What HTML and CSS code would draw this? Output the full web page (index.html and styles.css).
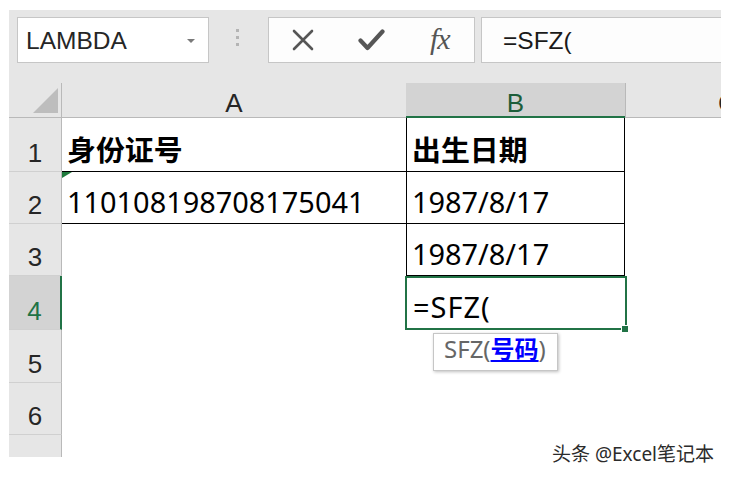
FILE: index.html
```html
<!DOCTYPE html>
<html lang="zh">
<head>
<meta charset="utf-8">
<title>Excel SFZ</title>
<link rel="stylesheet" href="styles.css">
</head>
<body>
<div class="window">
  <div class="fbar">
    <div class="namebox"><span class="nb-text">LAMBDA</span><span class="nb-arrow"></span></div>
    <div class="grip"><i></i><i></i><i></i></div>
    <div class="btns">
      <span class="btn"><svg width="22" height="22" viewBox="0 0 22 22"><path d="M2 2 L20 20 M20 2 L2 20" stroke="#565656" stroke-width="2.6" fill="none" stroke-linecap="round"/></svg></span>
      <span class="btn"><svg width="27" height="22" viewBox="0 0 27 22"><path d="M2.5 11.5 L9.5 19 L24.5 2.5" stroke="#565656" stroke-width="4.2" fill="none" stroke-linecap="round" stroke-linejoin="round"/></svg></span>
      <span class="btn fx">fx</span>
    </div>
    <div class="finput">=SFZ(</div>
  </div>
  <div class="sheet">
    <div class="corner"><svg width="52" height="34" viewBox="0 0 52 34"><polygon points="49,5 49,30 24,30" fill="#bdbdbd"/></svg></div>
    <div class="ch">A</div>
    <div class="ch sel">B</div>
    <div class="ch last">C</div>

    <div class="rh">1</div>
    <div class="c bb b">身份证号</div>
    <div class="c bb bx b">出生日期</div>
    <div class="c"></div>

    <div class="rh">2</div>
    <div class="c bb err">110108198708175041</div>
    <div class="c bb bx">1987/8/17</div>
    <div class="c"></div>

    <div class="rh">3</div>
    <div class="c"></div>
    <div class="c bb bx">1987/8/17</div>
    <div class="c"></div>

    <div class="rh sel">4</div>
    <div class="c"></div>
    <div class="c active"><span class="formula">=SFZ(</span><span class="selbox"></span><span class="handle"></span><div class="tip">SFZ(<span class="arg">号码</span>)</div></div>
    <div class="c"></div>

    <div class="rh">5</div>
    <div class="c"></div>
    <div class="c"></div>
    <div class="c"></div>

    <div class="rh">6</div>
    <div class="c"></div>
    <div class="c"></div>
    <div class="c"></div>

    <div class="rh"></div>
    <div class="c"></div>
    <div class="c"></div>
    <div class="c"></div>
  </div>
</div>
<div class="watermark">头条 @Excel笔记本</div>
</body>
</html>
```

FILE: styles.css
```css
* { box-sizing: border-box; }

body {
  margin: 0;
  background: #fff;
  font-family: "Noto Sans", "Noto Sans CJK SC", sans-serif;
}

.window {
  margin: 10px 0 0 9px;
  width: 712px;
  height: 447px;
  overflow: hidden;
  background: #e6e6e6;
}

/* formula bar */
.fbar {
  display: flex;
  height: 53px;
  padding: 7px 0 0 8px;
  margin-bottom: 20px;
}

.namebox {
  width: 192px;
  flex: none;
  border: 1px solid #c6c6c6;
  background: #fff;
  display: flex;
  align-items: center;
  padding: 2px 13px 0 8px;
  font: 24.5px/1 "Liberation Sans", sans-serif;
  color: #262626;
}

.nb-arrow {
  margin-left: auto;
  width: 0;
  height: 0;
  border-left: 4px solid transparent;
  border-right: 4px solid transparent;
  border-top: 4px solid #7a7a7a;
}

.grip {
  flex: none;
  width: 3px;
  margin-left: 27px;
  padding-top: 12px;
  display: flex;
  flex-direction: column;
  gap: 4px;
}

.grip i {
  display: block;
  width: 3px;
  height: 3px;
  background: #b4b4b4;
}

.btns {
  flex: none;
  margin-left: 29px;
  width: 207px;
  border: 1px solid #c6c6c6;
  background: #fdfdfd;
  display: grid;
  grid-template-columns: repeat(3, 1fr);
  align-items: center;
  justify-items: center;
}

.btn {
  display: flex;
  align-items: center;
  justify-content: center;
}

.btn svg { display: block; }

.fx {
  font: italic 30px/1 "Liberation Serif", serif;
  color: #555;
  letter-spacing: -1px;
  padding-bottom: 2px;
}

.finput {
  flex: none;
  margin-left: 6px;
  width: 300px;
  border: 1px solid #c6c6c6;
  border-right: none;
  background: #fdfdfd;
  display: flex;
  align-items: center;
  padding: 2px 0 0 21px;
  font: 24.5px/1 "Liberation Sans", sans-serif;
  color: #1a1a1a;
}

/* sheet grid */
.sheet {
  display: grid;
  grid-template-columns: 53px 344px 219px 204px;
  grid-template-rows: 35px 54px 52px 52px 54px 53px 52px 52px;
  width: 820px;
  background: #fff;
}

.corner {
  background: #e6e6e6;
  border-right: 1px solid #b9b9b9;
  border-bottom: 1px solid #b9b9b9;
}

.corner svg { display: block; }

.ch {
  background: #e6e6e6;
  border-bottom: 1px solid #b9b9b9;
  display: flex;
  justify-content: center;
  align-items: flex-end;
  padding-bottom: 1px;
  font: 26px/1 "Liberation Sans", sans-serif;
  color: #262626;
}

.ch.sel {
  background: #d3d3d3;
  border-bottom: 2px solid #217346;
  color: #1d5e3a;
  padding-bottom: 0;
}

.ch.last { border-left: 1px solid #b9b9b9; }

.rh {
  background: #e6e6e6;
  border-right: 1px solid #b9b9b9;
  border-bottom: 1px solid #d0d0d0;
  display: flex;
  justify-content: center;
  align-items: flex-end;
  padding-bottom: 5px;
  font: 26px/1 "Liberation Sans", sans-serif;
  color: #262626;
}

.rh.sel {
  background: #d3d3d3;
  border-right: 2px solid #217346;
  color: #217346;
}

.c {
  display: flex;
  align-items: flex-end;
  padding: 0 0 6.5px 5px;
  border-bottom: 1px solid transparent;
  font-size: 28.9px;
  line-height: 1;
  color: #000;
  white-space: nowrap;
}

.c.b { font-weight: 700; }
.c.bb { border-bottom-color: #000; }
.c.bx { border-left: 1px solid #000; border-right: 1px solid #000; }

.c.err { position: relative; }
.c.err::before {
  content: "";
  position: absolute;
  top: 0;
  left: 0;
  border-top: 6px solid #1f7a3c;
  border-right: 10px solid transparent;
}

.c.active {
  position: relative;
  padding: 0 0 7.5px 7px;
}

.formula { letter-spacing: 1px; }

.selbox {
  position: absolute;
  top: 0;
  left: -1px;
  right: -2px;
  bottom: -1px;
  border: 2px solid #217346;
}

.handle {
  position: absolute;
  right: -3px;
  bottom: -3px;
  width: 7px;
  height: 7px;
  background: #217346;
  border-left: 1px solid #fff;
  border-top: 1px solid #fff;
}

.tip {
  position: absolute;
  left: 27px;
  top: 57px;
  width: 125px;
  height: 38px;
  background: #fff;
  border: 1px solid #c6c6c6;
  box-shadow: 1px 1px 3px rgba(0, 0, 0, 0.25);
  padding: 3px 0 0 10px;
  font-size: 24px;
  line-height: 1;
  color: #666;
  white-space: nowrap;
  z-index: 2;
}

.tip .arg {
  color: #0000ff;
  font-weight: 700;
  text-decoration: underline;
}

.watermark {
  position: absolute;
  left: 552px;
  top: 445px;
  font-size: 19px;
  line-height: 1;
  color: #2b2b2b;
  white-space: nowrap;
  text-shadow: 0 0 2px #fff, 1px 1px 0 #fff;
}
```
